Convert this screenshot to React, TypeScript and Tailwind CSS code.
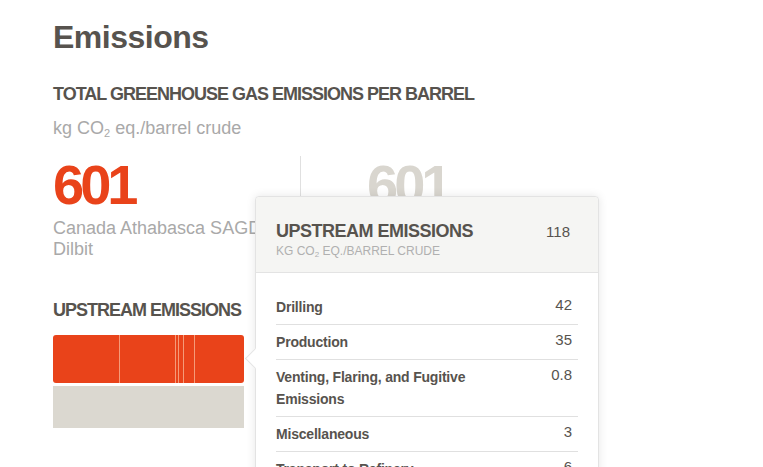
import React from "react";

const segments = [
  { label: "Drilling", value: "42", amount: 42 },
  { label: "Production", value: "35", amount: 35 },
  { label: "Venting, Flaring, and Fugitive Emissions", value: "0.8", amount: 0.8 },
  { label: "Miscellaneous", value: "3", amount: 3 },
  { label: "Transport to Refinery", value: "6", amount: 6 },
  { label: "Other", value: "31.2", amount: 31.2 },
];

export default function App() {
  return (
    <div className="relative h-[467px] w-[763px] overflow-hidden bg-white font-['Liberation_Sans',Arial,sans-serif]">
      <div className="pl-[53px] pt-[17px]">
        <h1 className="text-[32px] leading-[40px] font-bold tracking-[-0.5px] text-[#57534e]">Emissions</h1>
        <h2 className="mt-[25px] text-[18px] leading-[24px] font-bold tracking-[-1px] text-[#57534e]">
          TOTAL GREENHOUSE GAS EMISSIONS PER BARREL
        </h2>
        <p className="mt-[10px] text-[18px] leading-[24px] text-[#a9a9a9]">
          kg CO<sub className="text-[11px]">2</sub> eq./barrel crude
        </p>

        {/* totals */}
        <div className="mt-[16px] flex">
          <div className="w-[247px] pr-4">
            <div className="pt-[1px] text-[56px] leading-[56px] font-bold tracking-[-4px] text-[#e9431a]">601</div>
            <div className="mt-[5px] text-[18px] leading-[21px] text-[#a9a9a9]">Canada Athabasca SAGD Dilbit</div>
          </div>
          <div className="h-[104px] border-l border-[#e0e0e0] pl-[66px]">
            <div className="pt-[1px] text-[56px] leading-[56px] font-bold tracking-[-4px] text-[#d9d6cf]">601</div>
          </div>
        </div>

        <h3 className="mt-[38px] text-[18px] leading-[24px] font-bold tracking-[-1px] text-[#57534e]">UPSTREAM EMISSIONS</h3>

        <div className="mt-[13px] w-[191px]">
          <div className="flex h-[48px] overflow-hidden rounded-[3px] bg-[#e9431a]">
            {segments.map((s, i) => (
              <div
                key={s.label}
                className={i === 0 ? "h-full" : "h-full border-l border-[#f59a78]"}
                style={{ flexGrow: s.amount, flexBasis: 0 }}
              />
            ))}
          </div>
          <div className="mt-[3px] h-[42px] bg-[#dbd8d0]" />
        </div>
      </div>

      {/* popover */}
      <div className="absolute left-[255px] top-[196px] w-[344px] rounded-[4px] border border-[#e3e3e3] bg-white shadow-[0_0_10px_rgba(0,0,0,0.1)]">
        <div className="absolute left-[-8px] top-[154px] h-[15px] w-[15px] rotate-45 border-b border-l border-[#e3e3e3] bg-white" />
        <div className="relative flex items-start justify-between rounded-t-[4px] border-b border-[#e3e3e3] bg-[#f5f5f3] pb-[13px] pl-[20px] pr-[28px] pt-[24px]">
          <div>
            <div className="text-[18px] leading-[20px] font-bold tracking-[-0.5px] text-[#57534e]">UPSTREAM EMISSIONS</div>
            <div className="mt-[2px] text-[12px] leading-[16px] text-[#b0b0b0]">
              KG CO<sub className="text-[8px]">2</sub> EQ./BARREL CRUDE
            </div>
          </div>
          <div className="pt-[1px] text-[15px] leading-[20px] text-[#57534e]">118</div>
        </div>
        <div className="relative px-[20px] pt-[17px]">
          {segments.slice(0, 5).map((s) => (
            <div key={s.label} className="flex items-start justify-between border-b border-[#e0e0e0] py-[6px]">
              <div className="w-[228px] text-[14px] leading-[22px] font-bold tracking-[-0.2px] text-[#57534e]">{s.label}</div>
              <div className="-mt-[2px] pr-[6px] text-[15px] leading-[22px] text-[#57534e]">{s.value}</div>
            </div>
          ))}
        </div>
      </div>
    </div>
  );
}
